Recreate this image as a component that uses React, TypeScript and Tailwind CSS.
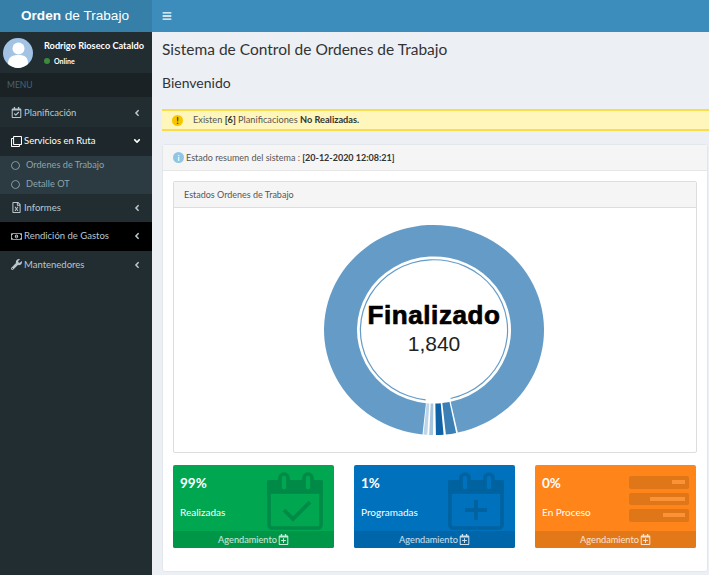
import { ReactNode } from "react";
import {
  FaAngleDown,
  FaAngleLeft,
  FaBars,
  FaRegCalendarCheck,
  FaRegCalendarPlus,
  FaRegCircle,
  FaRegClone,
  FaRegFileExcel,
  FaRegMoneyBillAlt,
  FaWrench,
} from "react-icons/fa";

const CX = 219;
const CY = 122;

// wedge of the donut, angle counted from the bottom
function wedge(from: number, to: number, r0: number, r1: number) {
  const pt = (a: number, r: number) => {
    const rad = (a * Math.PI) / 180;
    return `${(CX + r * Math.sin(rad)).toFixed(2)} ${(CY + r * Math.cos(rad) * 0.955).toFixed(2)}`;
  };
  const large = Math.abs(to - from) > 180 ? 1 : 0;
  return `M${pt(from, r1)} A${r1} ${r1 * 0.955} 0 ${large} 0 ${pt(to, r1)} L${pt(to, r0)} A${r0} ${r0 * 0.955} 0 ${large} 1 ${pt(from, r0)} Z`;
}

function Donut() {
  return (
    <svg width="440" height="240" viewBox="0 0 440 240" className="block">
      <path d={wedge(12.5, 354, 77, 110)} fill="#659cc7" />
      <path d={wedge(354.5, 356.5, 77, 110)} fill="#bcd5e8" />
      <path d={wedge(357.5, 359.5, 77, 110)} fill="#a5c5df" />
      <path d={wedge(1, 5, 77, 110)} fill="#0f62a6" />
      <path d={wedge(6.2, 11.6, 77, 110)} fill="#3a7fb5" />
      <path d={wedge(13, 353.5, 73, 74.2)} fill="#659cc7" />
      <text
        x={CX}
        y={116}
        textAnchor="middle"
        letterSpacing="0.6"
        className="font-['Liberation_Sans',Arial,sans-serif] text-[26px] font-bold"
        fill="#000"
        stroke="#000"
        strokeWidth="0.7"
      >
        Finalizado
      </text>
      <text
        x={CX}
        y={143}
        textAnchor="middle"
        className="font-['Liberation_Sans',Arial,sans-serif] text-[21px]"
        fill="#222"
      >
        1,840
      </text>
    </svg>
  );
}

function NavItem({
  icon,
  label,
  className = "",
  open = false,
}: {
  icon: ReactNode;
  label: string;
  className?: string;
  open?: boolean;
}) {
  return (
    <div className={`flex h-[28.5px] items-center pl-[10px] pr-[10px] text-[9.5px] whitespace-nowrap ${className}`}>
      <span className="flex w-[12px] justify-center text-[11px]">{icon}</span>
      <span className="ml-[2px] flex-1">{label}</span>
      {open ? <FaAngleDown className="text-[10px]" /> : <FaAngleLeft className="text-[10px]" />}
    </div>
  );
}

function SubItem({ label }: { label: string }) {
  return (
    <div className="flex h-[19px] items-center pl-[11px] text-[9.2px] text-[#8aa4af]">
      <FaRegCircle className="text-[9px]" />
      <span className="ml-[6px]">{label}</span>
    </div>
  );
}

function CalendarBig({ plus = false, hole }: { plus?: boolean; hole: string }) {
  return (
    <svg viewBox="0 0 56 58" className="h-[58px] w-[56px]" fill="none" stroke="currentColor" strokeWidth="3.6">
      <rect x="2" y="10" width="52" height="46" rx="3" />
      <rect x="2" y="10" width="52" height="10" fill="currentColor" />
      <rect x="13" y="2" width="8" height="17" rx="4" className={hole} />
      <rect x="37" y="2" width="8" height="17" rx="4" className={hole} />
      {plus ? (
        <path d="M28 28v20M17 38h22" strokeWidth="3.8" />
      ) : (
        <path d="M17 38l9 9 17-17" strokeWidth="3.8" />
      )}
    </svg>
  );
}

function ProcessBars() {
  const bars = ["w-[13px]", "w-[35px]", "w-[22px]"];
  return (
    <div className="mt-[4px] mr-[-4px] flex w-[60px] flex-col gap-[4px]">
      {bars.map((b) => (
        <div key={b} className="flex h-[12.500px] items-center justify-end rounded-[2px] bg-[#df7618] pr-[4px]">
          <div className={`h-[4px] ${b} bg-[#fb9235]`} />
        </div>
      ))}
    </div>
  );
}

function StatBox({
  pct,
  label,
  bg,
  foot,
  iconColor,
  icon,
}: {
  pct: string;
  label: string;
  bg: string;
  foot: string;
  iconColor: string;
  icon: ReactNode;
}) {
  return (
    <div className={`relative h-[83px] w-[161px] overflow-hidden rounded-[2px] text-white ${bg}`}>
      <div className="absolute top-[7px] right-[11px]">
        <div className={iconColor}>{icon}</div>
      </div>
      <div className="relative px-[7px] pt-[8px]">
        <div className="text-[13.5px] leading-[20px] font-bold">{pct}</div>
        <div className="mt-[10px] text-[10px] leading-[18px]">{label}</div>
      </div>
      <div className={`absolute right-0 bottom-0 left-0 flex h-[17px] items-center justify-center gap-[1px] text-[9.2px] text-white/80 ${foot}`}>
        Agendamiento <FaRegCalendarPlus className="text-[11px]" />
      </div>
    </div>
  );
}

export default function App() {
  return (
    <div className="flex h-[575px] w-[709px] overflow-hidden bg-[#ecf0f5] font-['Lato',sans-serif] text-[#333]">
      <aside className="flex w-[152px] shrink-0 flex-col bg-[#222d32]">
        <div className="flex h-[32px] items-center justify-center bg-[#367fa9] pr-[2px] font-['Liberation_Sans',Arial,sans-serif] text-[13.6px] text-white">
          <b>Orden</b>&nbsp;de Trabajo
        </div>
        <div className="flex h-[41px] items-center pl-[3px]">
          <svg viewBox="0 0 30 30" className="h-[30px] w-[30px] shrink-0">
            <circle cx="15" cy="15" r="15" fill="#a3c3e4" />
            <circle cx="15.500" cy="10.500" r="6" fill="#fff" />
            <path d="M5 26c0-7 4-9 10.500-9s9.500 2 9.500 9c-3 2-6 4-10 4s-7-2-10-4z" fill="#fff" />
          </svg>
          <div className="ml-[11px] text-white">
            <div className="text-[9.2px] leading-[14px] font-bold whitespace-nowrap">Rodrigo Rioseco Cataldo</div>
            <div className="mt-[3px] flex items-center gap-[4px] text-[7px] leading-[10px] font-bold">
              <span className="h-[6px] w-[6px] rounded-full bg-[#3c8b3c]" />
              Online
            </div>
          </div>
        </div>
        <div className="flex h-[24px] items-center bg-[#1a2226] pl-[7px] text-[8.5px] text-[#4b646f]">MENU</div>
        <div className="h-[1.5px]" />
        <NavItem icon={<FaRegCalendarCheck />} label="Planificación" className="text-[#b8c7ce]" />
        <NavItem icon={<FaRegClone />} label="Servicios en Ruta" className="bg-[#1e282c] text-white" open />
        <div className="bg-[#2c3b41]">
          <SubItem label="Ordenes de Trabajo" />
          <SubItem label="Detalle OT" />
        </div>
        <NavItem icon={<FaRegFileExcel />} label="Informes" className="text-[#b8c7ce]" />
        <NavItem icon={<FaRegMoneyBillAlt />} label="Rendición de Gastos" className="bg-black text-[#b8c7ce]" />
        <NavItem icon={<FaWrench />} label="Mantenedores" className="text-[#b8c7ce]" />
      </aside>

      <div className="flex min-w-0 flex-1 flex-col">
        <header className="flex h-[32px] items-center bg-[#3c8dbc] pl-[10px] text-white">
          <FaBars className="text-[10px]" />
        </header>
        <main className="flex-1 pl-[10px]">
          <h1 className="mt-[6px] text-[15.5px] leading-[23px] text-[#333]">Sistema de Control de Ordenes de Trabajo</h1>
          <h2 className="mt-[10px] text-[14px] leading-[23px] text-[#333]">Bienvenido</h2>

          <div className="mt-[15px] flex h-[22px] items-center border-y-2 border-[#fbdc4e] bg-[#fff6bb] pl-[10px] text-[9.2px] text-[#555]">
            <span className="flex h-[11px] w-[11px] items-center justify-center rounded-full bg-[#f7c600] text-[9px] leading-none font-bold text-[#333]">
              !
            </span>
            <span className="ml-[10px]">
              Existen <b className="text-[#333]">[6]</b> Planificaciones <b className="text-[#333]">No Realizadas.</b>
            </span>
          </div>

          <section className="mt-[13px] mr-[1px] h-[428px] rounded-[3px] border border-[#e3e6ea] bg-white">
            <div className="flex h-[26px] items-center border-b border-[#e7e7e7] bg-[#f5f5f5] pl-[10px] text-[9px] text-[#555]">
              <span className="flex h-[11px] w-[11px] items-center justify-center rounded-full bg-[#8ec6e4] text-[8px] leading-none font-bold text-white">
                i
              </span>
              <span className="ml-[2px]">
                Estado resumen del sistema : <b className="text-[#333]">[20-12-2020 12:08:21]</b>
              </span>
            </div>
            <div className="px-[10px] pt-[10px]">
              <div className="h-[272px] rounded-[2px] border border-[#ddd]">
                <div className="flex h-[26px] items-center border-b border-[#ddd] bg-[#f5f5f5] pl-[10px] text-[9px] text-[#555]">
                  Estados Ordenes de Trabajo
                </div>
                <div className="flex justify-center pr-[1px]">
                  <Donut />
                </div>
              </div>
              <div className="mt-[12px] flex justify-between pr-[1px]">
                <StatBox
                  pct="99%"
                  label="Realizadas"
                  bg="bg-[#00a650]"
                  foot="bg-[#009648]"
                  iconColor="text-[#008a47]"
                  icon={<CalendarBig hole="fill-[#00a650]" />}
                />
                <StatBox
                  pct="1%"
                  label="Programadas"
                  bg="bg-[#0071bc]"
                  foot="bg-[#0066a9]"
                  iconColor="text-[#00629f]"
                  icon={<CalendarBig plus hole="fill-[#0071bc]" />}
                />
                <StatBox
                  pct="0%"
                  label="En Proceso"
                  bg="bg-[#ff851b]"
                  foot="bg-[#e27818]"
                  iconColor=""
                  icon={<ProcessBars />}
                />
              </div>
            </div>
          </section>
        </main>
      </div>
    </div>
  );
}
